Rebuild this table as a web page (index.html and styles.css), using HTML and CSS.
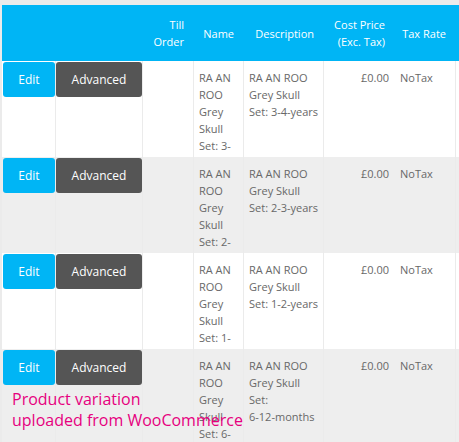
FILE: index.html
```html
<!DOCTYPE html>
<html>
<head>
<meta charset="utf-8">
<link rel="stylesheet" href="styles.css">
</head>
<body>
<div class="frame">
  <div class="grid head">
    <div class="hc"></div>
    <div class="hc"></div>
    <div class="hc">Till<br>Order</div>
    <div class="hc">Name</div>
    <div class="hc">Description</div>
    <div class="hc">Cost Price<br>(Exc. Tax)</div>
    <div class="hc">Tax Rate</div>
    <div class="hc"></div>
  </div>

  <div class="grid row">
    <div class="c bc b"><button class="btn edit">Edit</button></div>
    <div class="c bc2 b"><button class="btn adv">Advanced</button></div>
    <div class="c b"></div>
    <div class="c t b"><div class="clip">RA AN ROO Grey Skull Set: 3-<wbr><span class="nw">4-years</span></div></div>
    <div class="c t b"><div class="clip">RA AN ROO Grey Skull Set: 3-4-years</div></div>
    <div class="c t num">£0.00</div>
    <div class="c t b">NoTax</div>
    <div class="c"></div>
  </div>

  <div class="grid row alt">
    <div class="c bc b"><button class="btn edit">Edit</button></div>
    <div class="c bc2 b"><button class="btn adv">Advanced</button></div>
    <div class="c b"></div>
    <div class="c t b"><div class="clip">RA AN ROO Grey Skull Set: 2-<wbr><span class="nw">3-years</span></div></div>
    <div class="c t b"><div class="clip">RA AN ROO Grey Skull Set: 2-3-years</div></div>
    <div class="c t num">£0.00</div>
    <div class="c t b">NoTax</div>
    <div class="c"></div>
  </div>

  <div class="grid row">
    <div class="c bc b"><button class="btn edit">Edit</button></div>
    <div class="c bc2 b"><button class="btn adv">Advanced</button></div>
    <div class="c b"></div>
    <div class="c t b"><div class="clip">RA AN ROO Grey Skull Set: 1-<wbr><span class="nw">2-years</span></div></div>
    <div class="c t b"><div class="clip">RA AN ROO Grey Skull Set: 1-2-years</div></div>
    <div class="c t num">£0.00</div>
    <div class="c t b">NoTax</div>
    <div class="c"></div>
  </div>

  <div class="grid row alt">
    <div class="c bc b"><button class="btn edit">Edit</button></div>
    <div class="c bc2 b"><button class="btn adv">Advanced</button></div>
    <div class="c b"></div>
    <div class="c t b"><div class="clip">RA AN ROO Grey Skull Set: 6-<wbr><span class="nw">12-months</span></div></div>
    <div class="c t b"><div class="clip">RA AN ROO Grey Skull Set: <span class="nw">6-12-months</span></div></div>
    <div class="c t num">£0.00</div>
    <div class="c t b">NoTax</div>
    <div class="c"></div>
  </div>

  <div class="note">Product variation<br>uploaded from WooCommerce</div>
</div>
</body>
</html>
```

FILE: styles.css
```css
html, body {
  margin: 0;
  padding: 0;
  background: #ffffff;
  overflow: hidden;
}

body {
  font-family: "Open Sans", "Noto Sans", sans-serif;
  font-size: 11px;
  color: #686868;
}

.frame {
  position: relative;
  width: 457px;
  height: 437px;
  border-top: 5px solid #ebebeb;
  border-left: 2px solid #ebebeb;
  overflow: hidden;
}

.grid {
  display: grid;
  grid-template-columns: 54px 87px 51px 50px 80px 71px 61px 140px;
}

.head {
  background: #00b5f5;
  height: 56px;
  color: #ffffff;
}

.hc {
  display: flex;
  flex-direction: column;
  justify-content: center;
  align-items: flex-end;
  text-align: right;
  padding-right: 10px;
  line-height: 17px;
}

.row {
  height: 96px;
  background: #ffffff;
}

.row.alt {
  background: #eeeeee;
}

.c {
  box-sizing: border-box;
  line-height: 17px;
  overflow: hidden;
}

.c.b {
  border-right: 1px solid #ebebeb;
}

.c.t {
  padding: 8px 2px 0 5px;
}

.c.num {
  text-align: right;
  padding-right: 6px;
}

.clip {
  height: 85px;
  overflow: hidden;
}

.nw {
  white-space: nowrap;
}

.bc {
  padding: 1px 0 0 1px;
}

.bc2 {
  padding: 0;
  padding-top: 1px;
}

.btn {
  display: block;
  height: 35px;
  border: none;
  border-radius: 3px;
  color: #ffffff;
  font-family: "Open Sans", "Noto Sans", sans-serif;
  font-size: 12px;
  padding: 0;
  margin: 0;
}

.btn.edit {
  width: 52px;
  background: #00b5f5;
}

.btn.adv {
  width: 86px;
  background: #555555;
}

.note {
  position: absolute;
  left: 10px;
  top: 384px;
  font-size: 16px;
  line-height: 21px;
  color: #e6007e;
  white-space: nowrap;
}
```
